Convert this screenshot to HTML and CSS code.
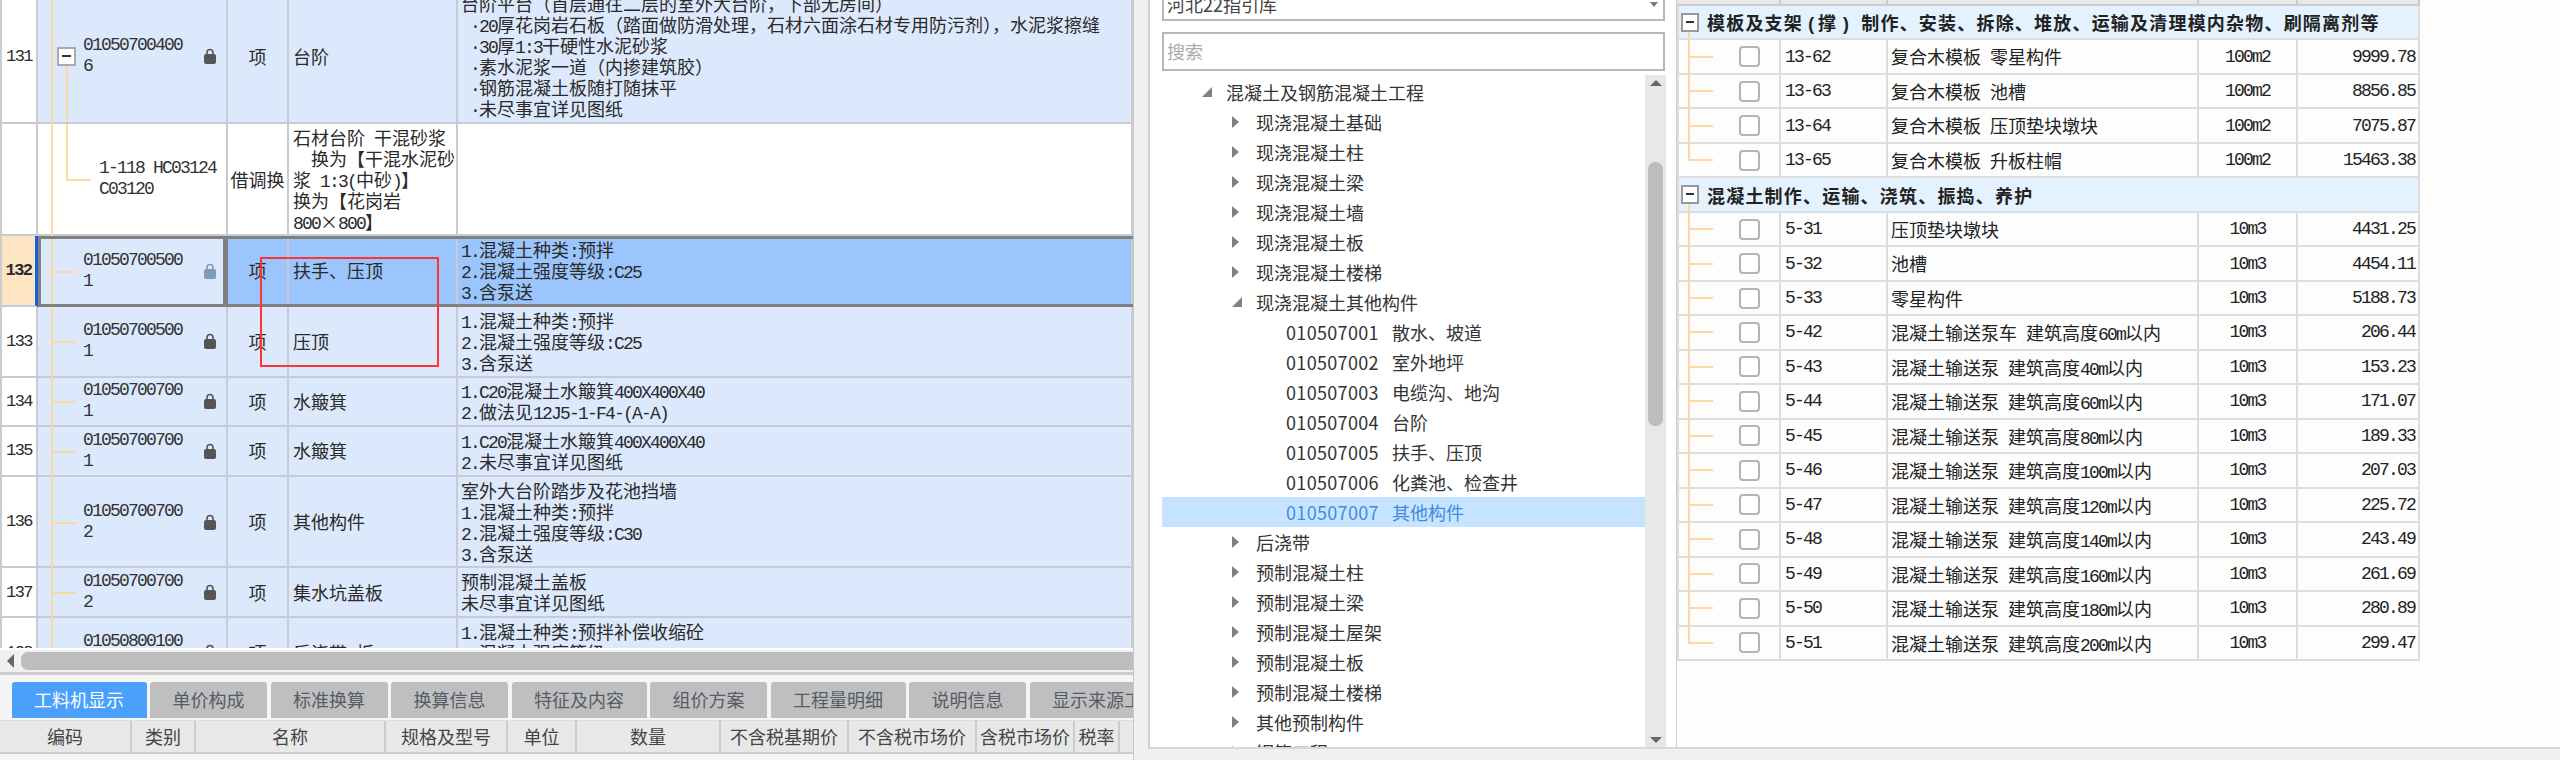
FILE: index.html
```html
<!DOCTYPE html>
<html lang="zh-CN">
<head>
<meta charset="utf-8">
<title>清单定额</title>
<link rel="stylesheet" href="styles.css">
</head>
<body>
<svg class="defs" width="0" height="0"><symbol id="lock" viewBox="0 0 12 16"><path d="M3 7.500V4.500a3 3 0 0 1 6 0V7.500" fill="none" stroke="currentColor" stroke-width="1.600"/><rect x="0" y="6" width="12" height="10" rx="2" fill="currentColor"/></symbol></svg>
<div class="app">
  <section class="left">
    <div class="grid">
      <div class="rows">
        <div class="row blue">
          <div class="num">131</div>
          <div class="code has-box"><i class="box"></i><span class="ct n">01050700400<br>6</span><svg class="lock"><use href="#lock"/></svg></div>
          <div class="unit">项</div>
          <div class="name"><div>台阶</div></div>
          <div class="desc"><div>台阶平台（首层通往二层的室外大台阶，下部无房间）<br><span class="n"> ·20</span>厚花岗岩石板（踏面做防滑处理，石材六面涂石材专用防污剂），水泥浆擦缝<br><span class="n"> ·30</span>厚<span class="n">1:3</span>干硬性水泥砂浆<br><span class="n"> ·</span>素水泥浆一道（内掺建筑胶）<br><span class="n"> ·</span>钢筋混凝土板随打随抹平<br><span class="n"> ·</span>未尽事宜详见图纸</div></div>
        </div>
        <div class="row sub">
          <div class="num"></div>
          <div class="code sub-code"><span class="ct n">1-118 HC03124<br>C03120</span></div>
          <div class="unit">借调换</div>
          <div class="name"><div>石材台阶<span class="n"> </span>干混砂浆<br><span class="n">  </span>换为【干混水泥砂<br>浆<span class="n"> 1:3(</span>中砂<span class="n">)</span>】<br>换为【花岗岩<br><span class="n">800</span>×<span class="n">800</span>】</div></div>
          <div class="desc"></div>
        </div>
        <div class="row blue sel">
          <div class="num">132</div>
          <div class="code"><span class="ct n">01050700500<br>1</span><svg class="lock"><use href="#lock"/></svg></div>
          <div class="unit">项</div>
          <div class="name"><div>扶手、压顶</div></div>
          <div class="desc"><div><span class="n">1.</span>混凝土种类<span class="n">:</span>预拌<br><span class="n">2.</span>混凝土强度等级<span class="n">:C25</span><br><span class="n">3.</span>含泵送</div></div>
        </div>
        <div class="row blue">
          <div class="num">133</div>
          <div class="code"><span class="ct n">01050700500<br>1</span><svg class="lock"><use href="#lock"/></svg></div>
          <div class="unit">项</div>
          <div class="name"><div>压顶</div></div>
          <div class="desc"><div><span class="n">1.</span>混凝土种类<span class="n">:</span>预拌<br><span class="n">2.</span>混凝土强度等级<span class="n">:C25</span><br><span class="n">3.</span>含泵送</div></div>
        </div>
        <div class="row blue">
          <div class="num">134</div>
          <div class="code"><span class="ct n">01050700700<br>1</span><svg class="lock"><use href="#lock"/></svg></div>
          <div class="unit">项</div>
          <div class="name"><div>水簸箕</div></div>
          <div class="desc"><div><span class="n">1.C20</span>混凝土水簸箕<span class="n">400X400X40</span><br><span class="n">2.</span>做法见<span class="n">12J5-1-F4-(A-A)</span></div></div>
        </div>
        <div class="row blue">
          <div class="num">135</div>
          <div class="code"><span class="ct n">01050700700<br>1</span><svg class="lock"><use href="#lock"/></svg></div>
          <div class="unit">项</div>
          <div class="name"><div>水簸箕</div></div>
          <div class="desc"><div><span class="n">1.C20</span>混凝土水簸箕<span class="n">400X400X40</span><br><span class="n">2.</span>未尽事宜详见图纸</div></div>
        </div>
        <div class="row blue">
          <div class="num">136</div>
          <div class="code"><span class="ct n">01050700700<br>2</span><svg class="lock"><use href="#lock"/></svg></div>
          <div class="unit">项</div>
          <div class="name"><div>其他构件</div></div>
          <div class="desc"><div>室外大台阶踏步及花池挡墙<br><span class="n">1.</span>混凝土种类<span class="n">:</span>预拌<br><span class="n">2.</span>混凝土强度等级<span class="n">:C30</span><br><span class="n">3.</span>含泵送</div></div>
        </div>
        <div class="row blue">
          <div class="num">137</div>
          <div class="code"><span class="ct n">01050700700<br>2</span><svg class="lock"><use href="#lock"/></svg></div>
          <div class="unit">项</div>
          <div class="name"><div>集水坑盖板</div></div>
          <div class="desc"><div>预制混凝土盖板<br>未尽事宜详见图纸</div></div>
        </div>
        <div class="row blue">
          <div class="num">138</div>
          <div class="code"><span class="ct n">01050800100<br>1</span><svg class="lock"><use href="#lock"/></svg></div>
          <div class="unit">项</div>
          <div class="name"><div>后浇带<span class="n">-</span>板</div></div>
          <div class="desc"><div><span class="n">1.</span>混凝土种类<span class="n">:</span>预拌补偿收缩砼<br><span class="n">2.</span>混凝土强度等级<span class="n">:C35</span><br><span class="n">3.</span>含泵送</div></div>
        </div>
      </div>
    </div>
    <div class="hsb"><i class="arrow-left"></i><i class="hthumb"></i></div>
    <div class="tabs">
      <div class="tab on">工料机显示</div>
      <div class="tab">单价构成</div>
      <div class="tab">标准换算</div>
      <div class="tab">换算信息</div>
      <div class="tab">特征及内容</div>
      <div class="tab">组价方案</div>
      <div class="tab">工程量明细</div>
      <div class="tab">说明信息</div>
      <div class="tab">显示来源工料机</div>
    </div>
    <div class="thead">
      <div>编码</div><div>类别</div><div>名称</div><div>规格及型号</div><div>单位</div><div>数量</div><div>不含税基期价</div><div>不含税市场价</div><div>含税市场价</div><div>税率</div><div></div>
    </div>
    <div class="redbox"></div>
  </section>

  <section class="mid">
    <div class="combo"><span>河北22指引库</span><i class="combo-arrow"></i></div>
    <div class="search">搜索</div>
    <div class="treewrap">
      <div class="tree">
        <div class="t l1"><i class="ar open"></i>混凝土及钢筋混凝土工程</div>
        <div class="t l2"><i class="ar"></i>现浇混凝土基础</div>
        <div class="t l2"><i class="ar"></i>现浇混凝土柱</div>
        <div class="t l2"><i class="ar"></i>现浇混凝土梁</div>
        <div class="t l2"><i class="ar"></i>现浇混凝土墙</div>
        <div class="t l2"><i class="ar"></i>现浇混凝土板</div>
        <div class="t l2"><i class="ar"></i>现浇混凝土楼梯</div>
        <div class="t l2"><i class="ar open"></i>现浇混凝土其他构件</div>
        <div class="t l3"><span class="tc">010507001</span>散水、坡道</div>
        <div class="t l3"><span class="tc">010507002</span>室外地坪</div>
        <div class="t l3"><span class="tc">010507003</span>电缆沟、地沟</div>
        <div class="t l3"><span class="tc">010507004</span>台阶</div>
        <div class="t l3"><span class="tc">010507005</span>扶手、压顶</div>
        <div class="t l3"><span class="tc">010507006</span>化粪池、检查井</div>
        <div class="t l3 cur"><span class="tc">010507007</span>其他构件</div>
        <div class="t l2"><i class="ar"></i>后浇带</div>
        <div class="t l2"><i class="ar"></i>预制混凝土柱</div>
        <div class="t l2"><i class="ar"></i>预制混凝土梁</div>
        <div class="t l2"><i class="ar"></i>预制混凝土屋架</div>
        <div class="t l2"><i class="ar"></i>预制混凝土板</div>
        <div class="t l2"><i class="ar"></i>预制混凝土楼梯</div>
        <div class="t l2"><i class="ar"></i>其他预制构件</div>
        <div class="t l2"><i class="ar"></i>钢筋工程</div>
      </div>
      <div class="vsb"><i class="up"></i><i class="vthumb"></i><i class="down"></i></div>
    </div>
  </section>

  <section class="right">
    <div class="rtable">
      <div class="rhead"><div></div><div></div><div></div><div></div><div></div></div>
      <div class="rbody">
        <div class="rsec"><i class="box2"></i><div>模板及支架<span class="n">(</span>撑<span class="n">) </span>制作、安装、拆除、堆放、运输及清理模内杂物、刷隔离剂等</div></div>
        <div class="rr"><div class="tc1"><i class="cb"></i></div><div class="rc n">13-62</div><div class="rn">复合木模板&ensp;零星构件</div><div class="ru n">100m2</div><div class="ra n">9999.78</div></div>
        <div class="rr"><div class="tc1"><i class="cb"></i></div><div class="rc n">13-63</div><div class="rn">复合木模板&ensp;池槽</div><div class="ru n">100m2</div><div class="ra n">8856.85</div></div>
        <div class="rr"><div class="tc1"><i class="cb"></i></div><div class="rc n">13-64</div><div class="rn">复合木模板&ensp;压顶垫块墩块</div><div class="ru n">100m2</div><div class="ra n">7075.87</div></div>
        <div class="rr last"><div class="tc1"><i class="cb"></i></div><div class="rc n">13-65</div><div class="rn">复合木模板&ensp;升板柱帽</div><div class="ru n">100m2</div><div class="ra n">15463.38</div></div>
        <div class="rsec"><i class="box2"></i><div>混凝土制作、运输、浇筑、振捣、养护</div></div>
        <div class="rr"><div class="tc1"><i class="cb"></i></div><div class="rc n">5-31</div><div class="rn">压顶垫块墩块</div><div class="ru n">10m3</div><div class="ra n">4431.25</div></div>
        <div class="rr"><div class="tc1"><i class="cb"></i></div><div class="rc n">5-32</div><div class="rn">池槽</div><div class="ru n">10m3</div><div class="ra n">4454.11</div></div>
        <div class="rr"><div class="tc1"><i class="cb"></i></div><div class="rc n">5-33</div><div class="rn">零星构件</div><div class="ru n">10m3</div><div class="ra n">5188.73</div></div>
        <div class="rr"><div class="tc1"><i class="cb"></i></div><div class="rc n">5-42</div><div class="rn">混凝土输送泵车&ensp;建筑高度<span class="n">60m</span>以内</div><div class="ru n">10m3</div><div class="ra n">206.44</div></div>
        <div class="rr"><div class="tc1"><i class="cb"></i></div><div class="rc n">5-43</div><div class="rn">混凝土输送泵&ensp;建筑高度<span class="n">40m</span>以内</div><div class="ru n">10m3</div><div class="ra n">153.23</div></div>
        <div class="rr"><div class="tc1"><i class="cb"></i></div><div class="rc n">5-44</div><div class="rn">混凝土输送泵&ensp;建筑高度<span class="n">60m</span>以内</div><div class="ru n">10m3</div><div class="ra n">171.07</div></div>
        <div class="rr"><div class="tc1"><i class="cb"></i></div><div class="rc n">5-45</div><div class="rn">混凝土输送泵&ensp;建筑高度<span class="n">80m</span>以内</div><div class="ru n">10m3</div><div class="ra n">189.33</div></div>
        <div class="rr"><div class="tc1"><i class="cb"></i></div><div class="rc n">5-46</div><div class="rn">混凝土输送泵&ensp;建筑高度<span class="n">100m</span>以内</div><div class="ru n">10m3</div><div class="ra n">207.03</div></div>
        <div class="rr"><div class="tc1"><i class="cb"></i></div><div class="rc n">5-47</div><div class="rn">混凝土输送泵&ensp;建筑高度<span class="n">120m</span>以内</div><div class="ru n">10m3</div><div class="ra n">225.72</div></div>
        <div class="rr"><div class="tc1"><i class="cb"></i></div><div class="rc n">5-48</div><div class="rn">混凝土输送泵&ensp;建筑高度<span class="n">140m</span>以内</div><div class="ru n">10m3</div><div class="ra n">243.49</div></div>
        <div class="rr"><div class="tc1"><i class="cb"></i></div><div class="rc n">5-49</div><div class="rn">混凝土输送泵&ensp;建筑高度<span class="n">160m</span>以内</div><div class="ru n">10m3</div><div class="ra n">261.69</div></div>
        <div class="rr"><div class="tc1"><i class="cb"></i></div><div class="rc n">5-50</div><div class="rn">混凝土输送泵&ensp;建筑高度<span class="n">180m</span>以内</div><div class="ru n">10m3</div><div class="ra n">280.89</div></div>
        <div class="rr last"><div class="tc1"><i class="cb"></i></div><div class="rc n">5-51</div><div class="rn">混凝土输送泵&ensp;建筑高度<span class="n">200m</span>以内</div><div class="ru n">10m3</div><div class="ra n">299.47</div></div>
      </div>
    </div>
  </section>
</div>
</body>
</html>
```
FILE: styles.css
```css
* { box-sizing: border-box; }
html, body { margin: 0; padding: 0; }
body {
  width: 2560px; height: 760px; overflow: hidden; background: #f0f0f0;
  font-family: "Noto Sans CJK SC", "Liberation Sans", sans-serif;
  font-size: 18px; color: #2a2a2a;
}
i { font-style: normal; display: block; }
.defs { position: absolute; }
.n {
  font-family: "Liberation Mono", "Noto Sans CJK SC", monospace;
  font-size: 18px; letter-spacing: -1.8px; white-space: pre; line-height: 1;
}
.name .n, .desc .n, .rn .n, .rsec .n { line-height: 0; }
.app { display: flex; height: 760px; }

/* left pane */
.left { position: relative; width: 1134px; height: 760px; display: flex; flex-direction: column; background: #f5f5f5; border-right: 1px solid #c8c8c8; flex: none; }
.grid { height: 648px; overflow: hidden; background: #fff; flex: none; }
.rows { margin-top: -9.8px; }
.row { position: relative; display: grid; grid-template-columns: 38px 190px 61px 169px 1fr; line-height: 21px; width: 1133px; }
.row > div { display: flex; align-items: center; padding: 2.8px 0; border-bottom: 2px solid #c8ccd2; border-right: 2px solid #c8ccd2; }
.row.blue > div { background: #dce9fc; }
.row.blue > .num, .row.sub > div { background: #fff; }
.num { justify-content: center; font-family: "Liberation Mono", monospace; font-size: 17px; letter-spacing: -1.600px; border-left: 2px solid #ccc; }
.unit { justify-content: center; }
.row > .name { padding-left: 4px; white-space: pre; }
.row > .desc { padding-left: 3px; white-space: pre; }
.row > .code { position: relative; padding-left: 45px; }
.code::before { content: ""; position: absolute; left: 13px; top: 0; bottom: -2px; width: 2px; background: #fdd8a2; }
.code::after { content: ""; position: absolute; left: 13px; top: 50%; width: 25px; height: 2px; background: #fdd8a2; }
.row > .sub-code { padding-left: 61px; }
.sub-code::after { left: 28px; width: 25px; }
.sub-code .ct { width: auto; }
.sub-code .ct::before { content: ""; position: absolute; left: 28px; top: 0; height: 50%; width: 2px; background: #fdd8a2; }
.has-box::after { left: 28px; top: 50%; width: 2px; height: 50%; }
.ct { width: 115px; flex: none; color: #333; line-height: 21px; }
.lock { width: 12px; height: 16px; margin-left: 6px; color: #555; flex: none; }
.box { position: absolute; left: 19px; top: 50%; margin-top: -9px; width: 19px; height: 19px; background: #fff; border: 2px solid #aaa; z-index: 1; }
.box::before { content: ""; position: absolute; left: -8px; top: 6px; width: 6px; height: 2px; background: #fdd8a2; }
.box::after { content: ""; position: absolute; left: 3px; top: 6px; width: 9px; height: 2px; background: #333; }
.row.sel > .num { background: #fde4c2; font-weight: 700; border-right: 3px solid #1060e0; }
.row.sel > div:not(.code):not(.num) { background: #9ac5fd; }
.row.sel > .code { box-shadow: inset 3px 0 #808080, inset -3px 0 #808080; border-right-color: #808080; }
.row.sel .lock { color: #7f9bb8; }
.row.sel::after { content: ""; position: absolute; left: 38px; right: 0; top: 0; bottom: 0; border-top: 3px solid #808080; border-bottom: 3px solid #808080; pointer-events: none; }

.hsb { position: relative; height: 27px; flex: none; background: #f0f0f0; border-top: 2px solid #fff; border-bottom: 3px solid #ccc; padding: 2px 0 2px 21px; }
.hthumb { height: 18px; background: #bdbdbd; border-radius: 7px 0 0 7px; }
.arrow-left { position: absolute; left: 7px; top: 4px; border-right: 7px solid #666; border-top: 7px solid transparent; border-bottom: 7px solid transparent; }
.tabs { height: 45px; flex: none; display: flex; gap: 3.5px; padding: 7px 0 2px 11.500px; overflow: hidden; background: #f5f5f5; }
.tab { flex: none; height: 36px; line-height: 34px; padding: 0 22.500px; background: #bfbfbf; border-radius: 3px 3px 0 0; color: #555c68; white-space: nowrap; }
.tab.on { background: #4aa0fc; color: #fff; }
.thead { height: 34px; flex: none; display: grid; grid-template-columns: 132px 64px 190px 122px 69px 144px 128px 128px 98px 45px 1fr; background: #e8e8e8; border-bottom: 2px solid #ccc; border-top: 1px solid #ddd; color: #444; line-height: 31px; text-align: center; white-space: nowrap; }
.thead > div { border-right: 2px solid #ccc; }
.thead > div:last-child { border-right: 0; }
.redbox { position: absolute; left: 260px; top: 257px; width: 179px; height: 110px; border: 2px solid #f33; }

/* middle pane */
.mid { margin-left: 14px; width: 528px; height: 749px; flex: none; overflow: hidden; background: #fff; border-left: 2px solid #d0d0d0; border-bottom: 2px solid #d8d8d8; padding-left: 12px; }
.combo { position: relative; margin-top: -13px; width: 503px; height: 34px; border: 2px solid #b8b8b8; line-height: 30px; padding-left: 3px; color: #444; }
.combo-arrow { position: absolute; right: 5px; top: 13px; border-top: 5px solid #777; border-left: 4px solid transparent; border-right: 4px solid transparent; }
.search { margin-top: 11px; width: 503px; height: 39px; border: 2px solid #b8b8b8; line-height: 35px; padding-left: 3px; color: #aaa; }
.treewrap { display: flex; margin-top: 4px; height: 672px; overflow: hidden; }
.tree { width: 483px; padding-top: 2px; flex: none; color: #333; }
.t { height: 30px; line-height: 30px; display: flex; align-items: center; white-space: nowrap; }
.l1 { padding-left: 40px; }
.l2 { padding-left: 70px; }
.l3 { padding-left: 124px; }
.ar { width: 24px; height: 12px; position: relative; flex: none; }
.ar::before { content: ""; position: absolute; left: 0; top: 0; border-left: 7px solid #808080; border-top: 6px solid transparent; border-bottom: 6px solid transparent; }
.ar.open::before { left: 0; top: 1px; border-left: 10px solid transparent; border-top: 0; border-bottom: 10px solid #808080; }
.tc { letter-spacing: 0.33px; margin-right: 13px; }
.cur { background: #c6e4ff; color: #3e8be0; }
.vsb { position: relative; width: 21px; height: 672px; background: #e8e8e8; flex: none; }
.up { position: absolute; left: 5px; top: 5px; border-bottom: 6px solid #666; border-left: 6px solid transparent; border-right: 6px solid transparent; }
.down { position: absolute; left: 5px; bottom: 4px; border-top: 6px solid #666; border-left: 6px solid transparent; border-right: 6px solid transparent; }
.vthumb { position: absolute; left: 3px; top: 87px; width: 15px; height: 264px; background: #bdbdbd; border-radius: 7px; }

/* right pane */
.right { flex: 1; height: 749px; background: #fdfdfd; border-left: 1px solid #ccc; border-bottom: 2px solid #d8d8d8; }
.rtable { width: 743px; }
.rhead { height: 6px; display: grid; grid-template-columns: 104px 107px 311px 99px 122px; background: #e8e8e8; border-bottom: 2px solid #ccc; }
.rhead > div { border-right: 2px solid #ccc; }
.rbody { height: 655px; display: grid; grid-auto-rows: 1fr; border-left: 2px solid #ddd; }
.rsec { position: relative; display: flex; align-items: center; background: #e3f2fe; border-bottom: 2px solid #ddd; border-right: 2px solid #ddd; font-weight: 700; letter-spacing: 1.2px; white-space: pre; color: #222; padding-left: 2px; line-height: 30px; }
.rsec .n { font-weight: 700; letter-spacing: -1.800px; margin: 0 3px; }
.rsec::after { content: ""; position: absolute; left: 9px; top: 26px; bottom: -2px; width: 2px; background: #fdd8a2; }
.box2 { flex: none; width: 18px; height: 19px; margin-right: 8px; background: #fff; border: 2px solid #999; position: relative; }
.box2::after { content: ""; position: absolute; left: 3px; top: 6px; width: 8px; height: 2px; background: #333; }
.rr { display: grid; grid-template-columns: 102px 107px 311px 99px 122px; min-height: 0; }
.rr > div { display: flex; align-items: center; border-bottom: 2px solid #ddd; border-right: 2px solid #ddd; white-space: pre; color: #222; min-height: 0; }
.tc1 { position: relative; padding-left: 60px; }
.tc1::before { content: ""; position: absolute; left: 9px; top: 0; bottom: -2px; width: 2px; background: #fdd8a2; }
.tc1::after { content: ""; position: absolute; left: 9px; top: 50%; margin-top: -1px; width: 25px; height: 2px; background: #fdd8a2; }
.rr.last .tc1::before { bottom: 50%; }
.cb { width: 21px; height: 21px; border: 2px solid #b4b4b4; border-radius: 4px; background: #fff; }
.rc { padding-left: 4px; }
.rr > .rn { display: block; padding-left: 3px; line-height: 32px; }
.ru { justify-content: center; }
.ra { justify-content: flex-end; padding-right: 3px; }
```
